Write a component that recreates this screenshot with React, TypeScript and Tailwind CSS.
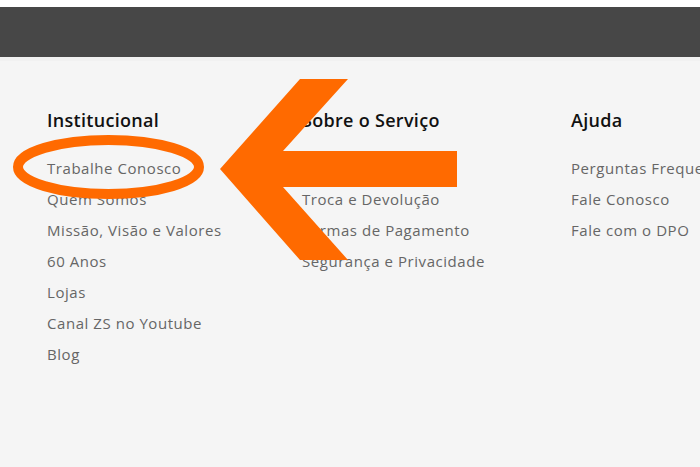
import React from "react";

const cols = [
  {
    title: "Institucional",
    w: "w-[255px]",
    links: [
      "Trabalhe Conosco",
      "Quem Somos",
      "Missão, Visão e Valores",
      "60 Anos",
      "Lojas",
      "Canal ZS no Youtube",
      "Blog",
    ],
  },
  {
    title: "Sobre o Serviço",
    w: "w-[269px]",
    links: ["Entrega", "Troca e Devolução", "Formas de Pagamento", "Segurança e Privacidade"],
  },
  {
    title: "Ajuda",
    w: "w-[300px]",
    links: ["Perguntas Frequentes", "Fale Conosco", "Fale com o DPO"],
  },
];

export default function App() {
  return (
    <div
      className="relative w-[700px] h-[467px] overflow-hidden bg-[#f5f5f5]"
      style={{ fontFamily: '"Open Sans", "Liberation Sans", sans-serif' }}
    >
      <div className="h-[7px] bg-white" />
      <div className="h-[50px] bg-[#474747]" />
      <div className="h-[4px] bg-[#f1f1f1]" />
      <div className="flex pl-[47px] pt-[47px] whitespace-nowrap">
        {cols.map((c) => (
          <div key={c.title} className={`${c.w} shrink-0`}>
            <h3 className="text-[18px] leading-[24px] font-semibold tracking-[0.3px] text-[#111]">{c.title}</h3>
            <ul className="mt-[21px] flex flex-col">
              {c.links.map((l) => (
                <li key={l} className="h-[31px] text-[15px] leading-[31px] tracking-[0.55px] text-[#666]">
                  {l}
                </li>
              ))}
            </ul>
          </div>
        ))}
      </div>
      <svg className="absolute left-0 top-0 pointer-events-none" width="700" height="467" viewBox="0 0 700 467">
        <ellipse cx="108.5" cy="167" rx="90.5" ry="27" fill="none" stroke="#ff6a00" strokeWidth="10" />
        <polygon
          points="220,169 300,79 348,79 283,151 457,151 457,187 283,187 348,260 300,260"
          fill="#ff6a00"
        />
      </svg>
    </div>
  );
}
